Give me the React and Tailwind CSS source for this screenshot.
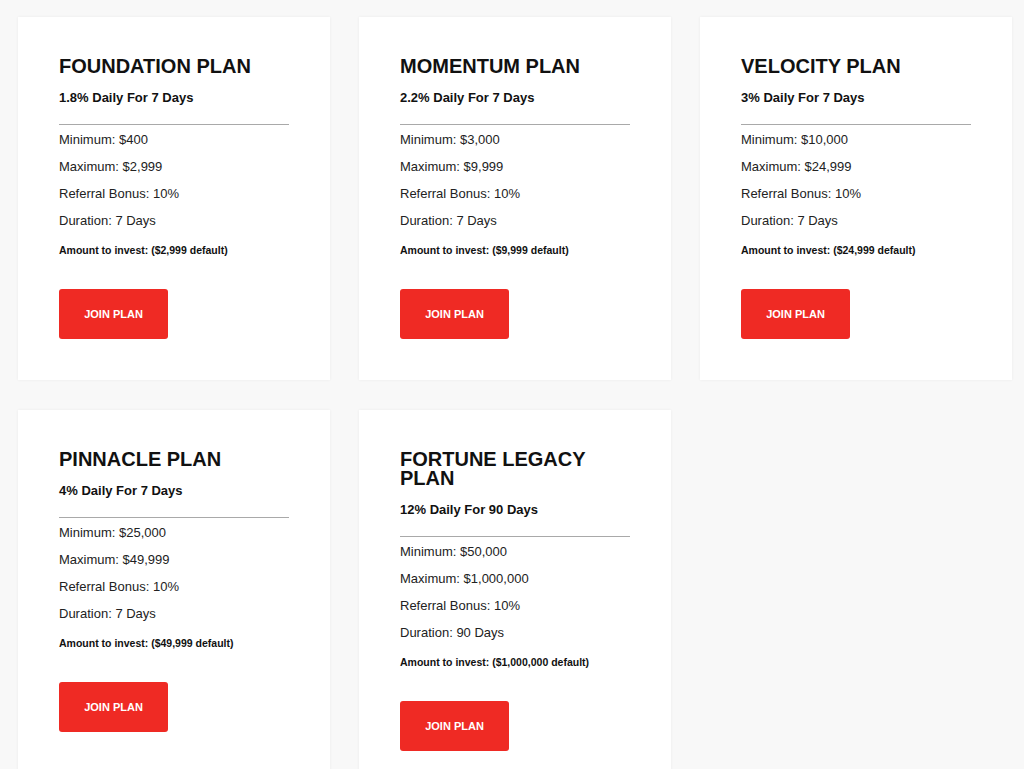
const plans = [
  {
    name: "FOUNDATION PLAN",
    rate: "1.8% Daily For 7 Days",
    min: "$400",
    max: "$2,999",
    duration: "7 Days",
  },
  {
    name: "MOMENTUM PLAN",
    rate: "2.2% Daily For 7 Days",
    min: "$3,000",
    max: "$9,999",
    duration: "7 Days",
  },
  {
    name: "VELOCITY PLAN",
    rate: "3% Daily For 7 Days",
    min: "$10,000",
    max: "$24,999",
    duration: "7 Days",
  },
  {
    name: "PINNACLE PLAN",
    rate: "4% Daily For 7 Days",
    min: "$25,000",
    max: "$49,999",
    duration: "7 Days",
  },
  {
    name: "FORTUNE LEGACY PLAN",
    rate: "12% Daily For 90 Days",
    min: "$50,000",
    max: "$1,000,000",
    duration: "90 Days",
  },
];

const PlanCard = ({ plan }) => {
  return (
    <div className="bg-white pt-[40px] px-[41px] pb-[41px] shadow-[0_0_3px_rgba(0,0,0,0.06)]">
      <h3 className="text-[20px] leading-[19px] font-bold text-[#111]">
        {plan.name}
      </h3>
      <p className="mt-[12px] text-[13px] leading-[20px] font-bold text-[#111]">
        {plan.rate}
      </p>
      <div className="mt-[16px] h-px bg-[#a9a9a9]" />
      <ul className="mt-px text-[13px] leading-[27px] text-[#222]">
        <li>Minimum: {plan.min}</li>
        <li>Maximum: {plan.max}</li>
        <li>Referral Bonus: 10%</li>
        <li>Duration: {plan.duration}</li>
      </ul>
      <p className="mt-[6px] text-[10.5px] leading-[20px] font-bold text-[#111]">
        Amount to invest: ({plan.max} default)
      </p>
      <button className="mt-[29px] w-[109px] h-[50px] flex items-center justify-center rounded-[3px] bg-[#ef2a24] text-white text-[11px] font-bold">
        JOIN PLAN
      </button>
    </div>
  );
};

export default function App() {
  return (
    <div
      className="min-h-screen bg-[#f8f8f8] pt-[17px] pl-[18px] pr-[12px] pb-10"
      style={{ fontFamily: '"Liberation Sans", Arial, sans-serif' }}
    >
      <div className="grid grid-cols-[312px_312px_312px] gap-x-[29px] gap-y-[30px]">
        {plans.map((plan) => (
          <PlanCard key={plan.name} plan={plan} />
        ))}
      </div>
    </div>
  );
}
